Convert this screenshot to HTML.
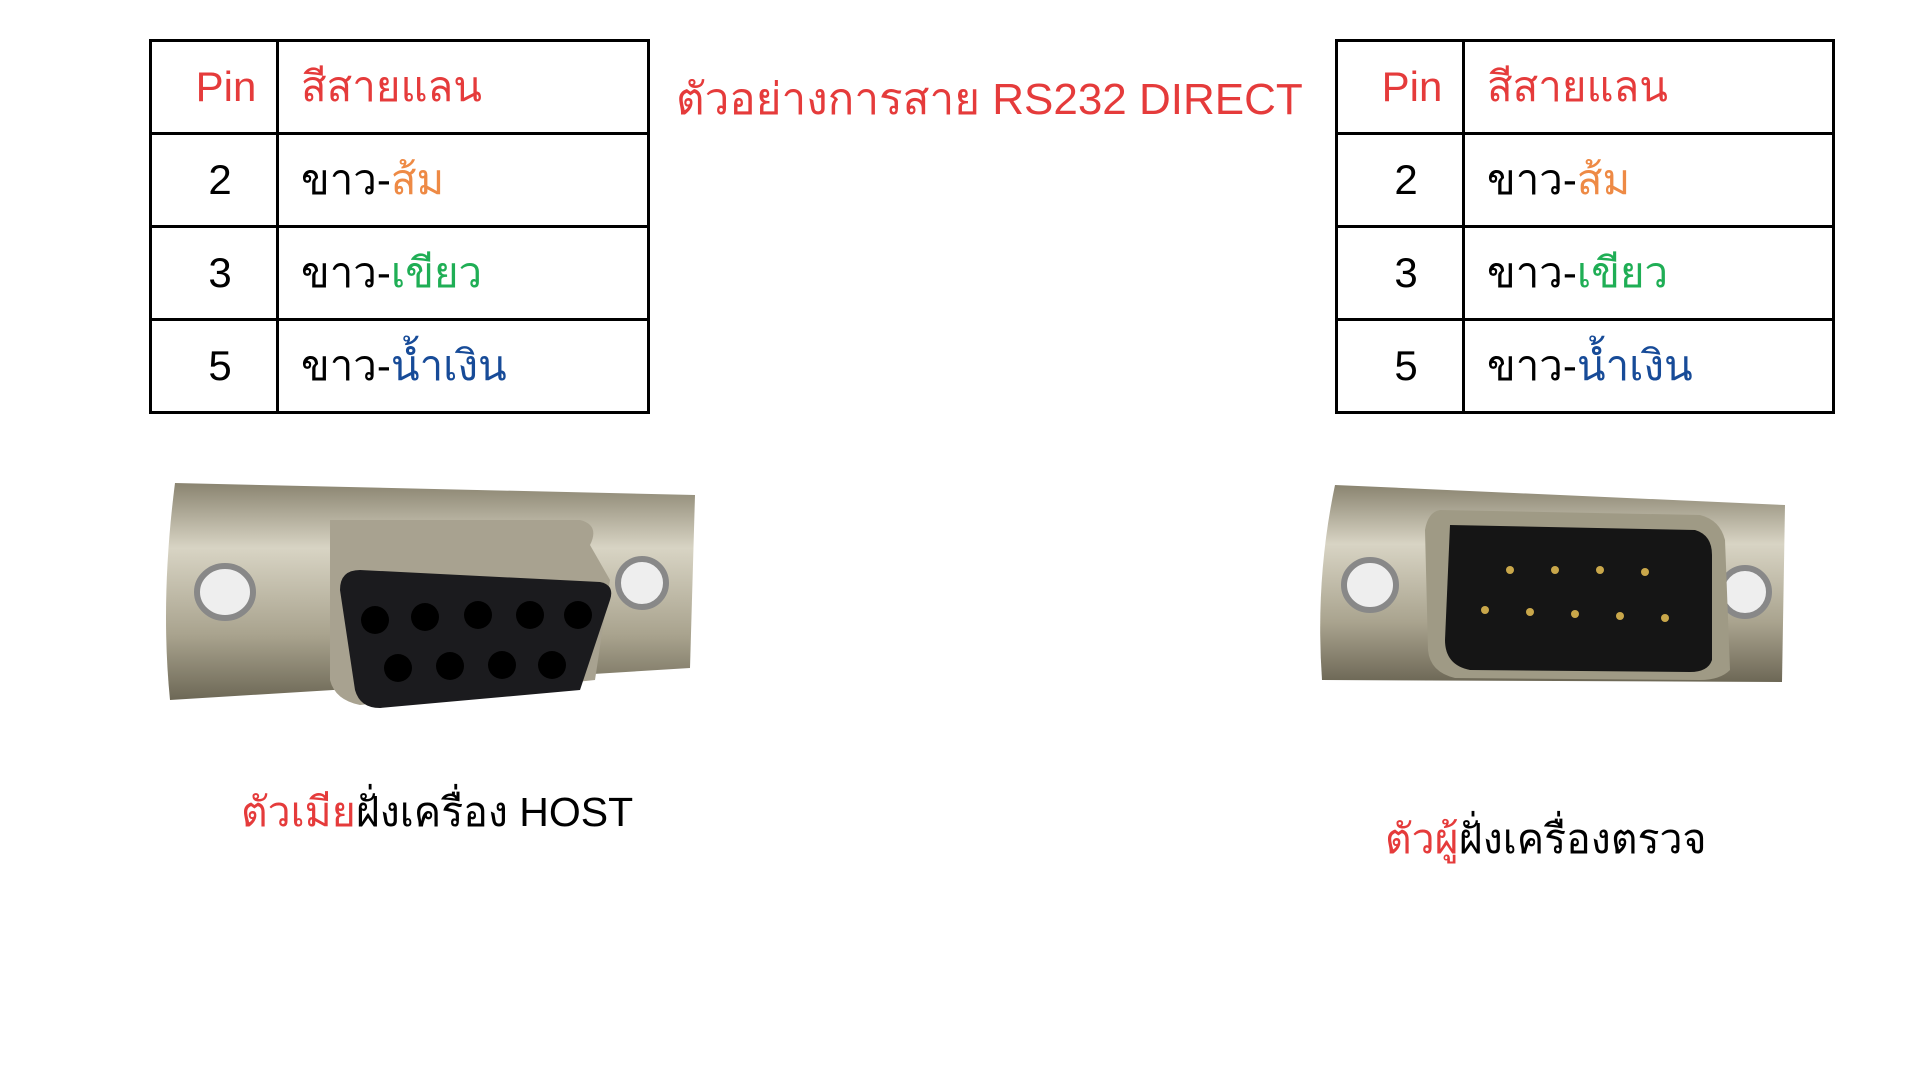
<!DOCTYPE html>
<html><head><meta charset="utf-8"><style>
body{margin:0;width:1920px;height:1080px;background:#fff;position:relative;overflow:hidden;font-family:"Liberation Sans","Noto Sans CJK SC",sans-serif}
table{position:absolute;border-collapse:collapse;font-size:42px}
td{border:3px solid #000;padding:0;height:90px}
td.p{width:124px;text-align:center}
td.p span{position:relative;left:6px}
td.h span{left:12px}
td.c{padding-left:22px}
.r{color:#e53b3b}.o{color:#ee8a45}.g{color:#1fae55}.b{color:#174b98}
.t{position:absolute;white-space:nowrap;font-size:41px}
</style></head><body>
<table style="left:149px;top:39px;width:501px">
<tr><td class="p h r"><span>Pin</span></td><td class="c r">สีสายแลน</td></tr>
<tr><td class="p"><span>2</span></td><td class="c">ขาว-<span class="o">ส้ม</span></td></tr>
<tr><td class="p"><span>3</span></td><td class="c">ขาว-<span class="g">เขียว</span></td></tr>
<tr><td class="p"><span>5</span></td><td class="c">ขาว-<span class="b">น้ำเงิน</span></td></tr>
</table>
<table style="left:1335px;top:39px;width:500px">
<tr><td class="p h r"><span>Pin</span></td><td class="c r">สีสายแลน</td></tr>
<tr><td class="p"><span>2</span></td><td class="c">ขาว-<span class="o">ส้ม</span></td></tr>
<tr><td class="p"><span>3</span></td><td class="c">ขาว-<span class="g">เขียว</span></td></tr>
<tr><td class="p"><span>5</span></td><td class="c">ขาว-<span class="b">น้ำเงิน</span></td></tr>
</table>
<div class="t r" style="left:676px;top:64px;font-size:44px">ตัวอย่างการสาย RS232 DIRECT</div>
<svg style="position:absolute;left:0;top:0" width="1920" height="1080">
<defs><linearGradient id="m" x1="0" y1="0" x2="0" y2="1"><stop offset="0" stop-color="#8a8470"/><stop offset=".3" stop-color="#d8d4c4"/><stop offset=".7" stop-color="#a9a38e"/><stop offset="1" stop-color="#6d6856"/></linearGradient></defs>
<path d="M175 483 L695 495 L690 668 L170 700 Q160 600 175 483Z" fill="url(#m)"/>
<ellipse cx="225" cy="592" rx="28" ry="26" fill="#eee" stroke="#888" stroke-width="6"/>
<ellipse cx="642" cy="583" rx="24" ry="24" fill="#eee" stroke="#888" stroke-width="6"/>
<path d="M330 520 L580 520 Q600 525 590 545 L610 580 L595 680 L360 705 Q335 700 330 680Z" fill="#a8a290"/>
<path d="M340 590 Q340 570 360 570 L600 582 Q615 585 610 600 L580 690 L380 708 Q360 708 355 690Z" fill="#1b1b1e"/>
<g fill="#000"><circle cx="375" cy="620" r="14"/><circle cx="425" cy="617" r="14"/><circle cx="478" cy="615" r="14"/><circle cx="530" cy="615" r="14"/><circle cx="578" cy="615" r="14"/><circle cx="398" cy="668" r="14"/><circle cx="450" cy="666" r="14"/><circle cx="502" cy="665" r="14"/><circle cx="552" cy="665" r="14"/></g>
<path d="M1335 485 L1785 505 L1782 682 L1322 680 Q1315 580 1335 485Z" fill="url(#m)"/>
<ellipse cx="1370" cy="585" rx="26" ry="25" fill="#eee" stroke="#888" stroke-width="6"/>
<ellipse cx="1745" cy="592" rx="24" ry="24" fill="#eee" stroke="#888" stroke-width="6"/>
<path d="M1440 510 L1700 515 Q1720 520 1725 540 L1730 670 Q1720 680 1700 680 L1455 678 Q1430 672 1428 650 L1425 530 Q1428 512 1440 510Z" fill="#9f9a85"/>
<path d="M1450 525 L1695 530 Q1712 535 1712 555 L1712 660 Q1708 672 1690 672 L1470 670 Q1445 665 1445 640Z" fill="#151515"/>
<g fill="#c9a74a"><circle cx="1510" cy="570" r="4"/><circle cx="1555" cy="570" r="4"/><circle cx="1600" cy="570" r="4"/><circle cx="1645" cy="572" r="4"/><circle cx="1485" cy="610" r="4"/><circle cx="1530" cy="612" r="4"/><circle cx="1575" cy="614" r="4"/><circle cx="1620" cy="616" r="4"/><circle cx="1665" cy="618" r="4"/></g>
</svg>
<div class="t" style="left:241px;top:780px"><span class="r">ตัวเมีย</span>ฝั่งเครื่อง HOST</div>
<div class="t" style="left:1385px;top:807px"><span class="r">ตัวผู้</span>ฝั่งเครื่องตรวจ</div>
</body></html>
